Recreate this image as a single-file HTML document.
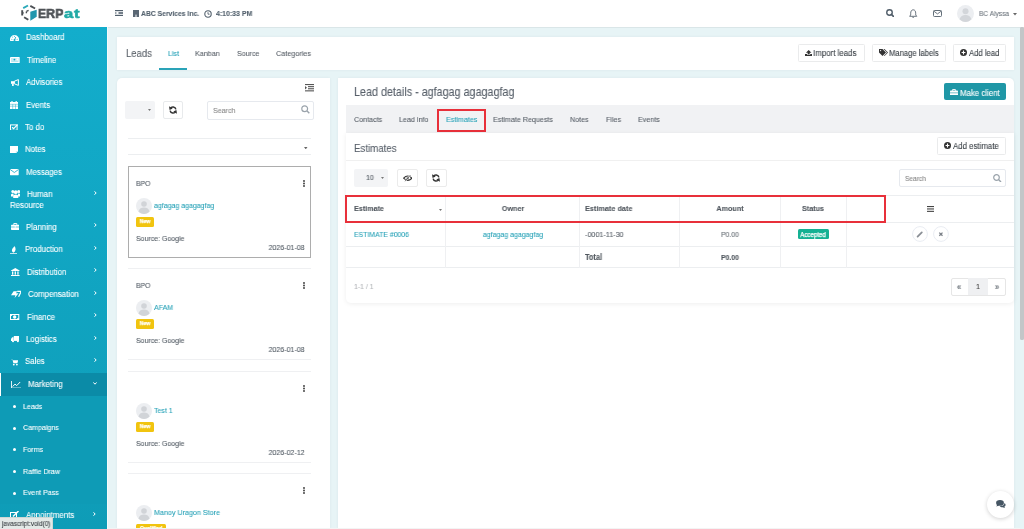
<!DOCTYPE html>
<html><head><meta charset="utf-8">
<style>
*{box-sizing:border-box;margin:0;padding:0}
html,body{width:1024px;height:529px;overflow:hidden}
body{font-family:"Liberation Sans",sans-serif;background:#e7f4f6;position:relative}
.t{position:absolute;white-space:nowrap;-webkit-text-stroke:0.1px currentColor;will-change:transform}
.r{position:absolute;display:block}
</style></head>
<body>
<div class="r" style="left:0px;top:0px;width:1024px;height:27px;background:#fff;"></div>
<div class="r" style="left:107px;top:27px;width:917px;height:1px;background:#dae6e8;"></div>
<div class="r" style="left:0px;top:27px;width:107px;height:502px;background:linear-gradient(#13adcc,#0e9cb7);"></div>
<div class="r" style="left:107px;top:27px;width:1px;height:502px;background:#f4fafb;"></div>
<div class="r" style="left:1020px;top:27px;width:4px;height:313px;background:#c3c6c8;border-radius:2px 2px 2px 2px;"></div>
<svg class="r" style="left:20px;top:4px;" width="18" height="18" viewBox="0 0 18 18">
<g stroke-linecap="butt" fill="none" stroke-width="1.9">
<path d="M3.2 4.1 L8 1.5" stroke="#2aa9b8"/>
<path d="M10.3 1.9 L15.1 4.5" stroke="#4c5054"/>
<path d="M2.2 6.2 V11.5" stroke="#4c5054"/>
<path d="M4.1 13.2 L8.3 15.7" stroke="#4c5054"/>
<path d="M6.4 7.4 L8.6 6.4 M6.4 7.4 V9.2" stroke="#4c5054" stroke-width="1.4"/>
</g>
<path d="M10.3 7.7 L16.7 5.7 V12.8 L10.3 16.7 Z" fill="#2196ad"/>
<path d="M2.2 7.5 L4.2 8.9 L2.2 10.3 Z" fill="#4c5054"/>
</svg>
<div class="t" style="left:38.40px;top:6.71px;font-size:13.28px;line-height:13.28px;color:#4e5256;font-weight:bold;transform:scaleX(0.9302);transform-origin:0 50%;-webkit-text-stroke:0.55px #4e5256;">ERP</div>
<div class="t" style="left:63.80px;top:6.80px;font-size:13.10px;line-height:13.10px;color:#22aaa6;font-weight:bold;letter-spacing:0.5px;transform:scaleX(1.0000);transform-origin:0 50%;transform:scaleX(1.27);-webkit-text-stroke:0.55px #22aaa6;">at</div>
<svg class="r" style="left:115px;top:10px;" width="8" height="6" viewBox="0 0 8 6"><rect x="0" y="0" width="8" height="1.2" fill="#52606d"/><rect x="3.5" y="2.2" width="4.5" height="0.8" fill="#52606d"/><rect x="3.5" y="3.2" width="4.5" height="0.8" fill="#52606d"/><rect x="0" y="4.8" width="8" height="1.2" fill="#52606d"/><path d="M0.3 2 L2 3 L0.3 4 Z" fill="#52606d"/></svg>
<svg class="r" style="left:133px;top:10px;" width="6" height="7" viewBox="0 0 6 7"><rect x="0" y="0" width="6" height="7" fill="#5a6773"/><rect x="2" y="4.6" width="2" height="2.4" fill="#aab2b9"/></svg>
<div class="t" style="left:141.30px;top:10.35px;font-size:7.48px;line-height:7.48px;color:#52606d;font-weight:bold;transform:scaleX(0.9091);transform-origin:0 50%;">ABC Services Inc.</div>
<svg class="r" style="left:203.5px;top:9.8px;" width="8" height="8" viewBox="0 0 8 8"><circle cx="4" cy="4" r="3.2" fill="none" stroke="#52606d" stroke-width="1.1"/><path d="M4 2.2 V4.2 H5.6" fill="none" stroke="#52606d" stroke-width="0.9"/></svg>
<div class="t" style="left:215.60px;top:10.27px;font-size:7.65px;line-height:7.65px;color:#52606d;font-weight:bold;transform:scaleX(0.9091);transform-origin:0 50%;">4:10:33 PM</div>
<svg class="r" style="left:885.5px;top:9px;" width="8" height="8" viewBox="0 0 8 8"><circle cx="3.5" cy="3.5" r="2.75" fill="none" stroke="#4f5c68" stroke-width="1.35"/><path d="M5.4 5.4 L7.4 7.4" stroke="#4f5c68" stroke-width="1.6" stroke-linecap="round"/></svg>
<svg class="r" style="left:909.3px;top:8.6px;" width="8.4" height="9" viewBox="0 0 8.4 9"><path d="M4.2 0.8 C2.4 0.8 1.7 2.4 1.7 4.2 V6 L0.6 7.3 H7.8 L6.7 6 V4.2 C6.7 2.4 6 0.8 4.2 0.8 Z" fill="none" stroke="#5c6873" stroke-width="0.9" stroke-linejoin="round"/><path d="M3.3 7.9 Q4.2 9 5.1 7.9" fill="#5c6873" stroke="#5c6873" stroke-width="0.6"/></svg>
<svg class="r" style="left:932.8px;top:10px;" width="9" height="7" viewBox="0 0 9 7"><rect x="0.5" y="0.5" width="8" height="6" rx="0.9" fill="none" stroke="#5c6873" stroke-width="0.95"/><path d="M0.9 1.2 L4.5 3.9 L8.1 1.2" fill="none" stroke="#5c6873" stroke-width="0.9"/></svg>
<svg class="r" style="left:957px;top:5px;" width="17" height="17" viewBox="0 0 17 17"><circle cx="8.5" cy="8.5" r="8.5" fill="#eceef1"/><circle cx="8.5" cy="6.3" r="3" fill="#d3d6da"/><path d="M2.6 14.3 C3.5 11 6 10 8.5 10 C11 10 13.5 11 14.4 14.3 C13 15.8 11 17 8.5 17 C6 17 4 15.8 2.6 14.3 Z" fill="#d3d6da"/></svg>
<div class="t" style="left:979.00px;top:10.15px;font-size:7.26px;line-height:7.26px;color:#6e767e;transform:scaleX(0.9091);transform-origin:0 50%;">BC Alyssa</div>
<svg class="r" style="left:1012.5px;top:12.5px;" width="4" height="3" viewBox="0 0 4 3"><path d="M0 0 H4 L2 2.4 Z" fill="#666"/></svg>
<div class="r" style="left:0px;top:373px;width:107px;height:23px;background:#0b8ba7;"></div>
<div class="r" style="left:0px;top:373px;width:1px;height:23px;background:#fff;"></div>
<div class="r" style="left:0px;top:396px;width:107px;height:107.5px;background:#0e9bb6;"></div>
<div class="t" style="left:26.00px;top:33.45px;font-size:8.69px;line-height:8.69px;color:#fff;transform:scaleX(0.9091);transform-origin:0 50%;">Dashboard</div>
<div class="t" style="left:27.00px;top:55.85px;font-size:8.69px;line-height:8.69px;color:#fff;transform:scaleX(0.9091);transform-origin:0 50%;">Timeline</div>
<div class="t" style="left:26.00px;top:78.25px;font-size:8.69px;line-height:8.69px;color:#fff;transform:scaleX(0.9091);transform-origin:0 50%;">Advisories</div>
<div class="t" style="left:25.50px;top:100.75px;font-size:8.69px;line-height:8.69px;color:#fff;transform:scaleX(0.9091);transform-origin:0 50%;">Events</div>
<div class="t" style="left:25.00px;top:122.85px;font-size:8.69px;line-height:8.69px;color:#fff;transform:scaleX(0.9091);transform-origin:0 50%;">To do</div>
<div class="t" style="left:25.40px;top:145.45px;font-size:8.69px;line-height:8.69px;color:#fff;transform:scaleX(0.9091);transform-origin:0 50%;">Notes</div>
<div class="t" style="left:26.00px;top:167.65px;font-size:8.69px;line-height:8.69px;color:#fff;transform:scaleX(0.9091);transform-origin:0 50%;">Messages</div>
<div class="t" style="left:26.80px;top:189.95px;font-size:8.69px;line-height:8.69px;color:#fff;transform:scaleX(0.9091);transform-origin:0 50%;">Human</div>
<svg class="r" style="left:94px;top:190.6px;" width="3" height="4" viewBox="0 0 3 4"><path d="M0.4 0.3 L2.2 2 L0.4 3.7" fill="none" stroke="#fff" stroke-width="1"/></svg>
<div class="t" style="left:26.00px;top:222.75px;font-size:8.69px;line-height:8.69px;color:#fff;transform:scaleX(0.9091);transform-origin:0 50%;">Planning</div>
<svg class="r" style="left:94px;top:223.4px;" width="3" height="4" viewBox="0 0 3 4"><path d="M0.4 0.3 L2.2 2 L0.4 3.7" fill="none" stroke="#fff" stroke-width="1"/></svg>
<div class="t" style="left:24.50px;top:245.45px;font-size:8.69px;line-height:8.69px;color:#fff;transform:scaleX(0.9091);transform-origin:0 50%;">Production</div>
<svg class="r" style="left:94px;top:246.1px;" width="3" height="4" viewBox="0 0 3 4"><path d="M0.4 0.3 L2.2 2 L0.4 3.7" fill="none" stroke="#fff" stroke-width="1"/></svg>
<div class="t" style="left:27.00px;top:267.75px;font-size:8.69px;line-height:8.69px;color:#fff;transform:scaleX(0.9091);transform-origin:0 50%;">Distribution</div>
<svg class="r" style="left:94px;top:268.40000000000003px;" width="3" height="4" viewBox="0 0 3 4"><path d="M0.4 0.3 L2.2 2 L0.4 3.7" fill="none" stroke="#fff" stroke-width="1"/></svg>
<div class="t" style="left:28.30px;top:290.15px;font-size:8.69px;line-height:8.69px;color:#fff;transform:scaleX(0.9091);transform-origin:0 50%;">Compensation</div>
<svg class="r" style="left:94px;top:290.8px;" width="3" height="4" viewBox="0 0 3 4"><path d="M0.4 0.3 L2.2 2 L0.4 3.7" fill="none" stroke="#fff" stroke-width="1"/></svg>
<div class="t" style="left:26.50px;top:312.55px;font-size:8.69px;line-height:8.69px;color:#fff;transform:scaleX(0.9091);transform-origin:0 50%;">Finance</div>
<svg class="r" style="left:94px;top:313.20000000000005px;" width="3" height="4" viewBox="0 0 3 4"><path d="M0.4 0.3 L2.2 2 L0.4 3.7" fill="none" stroke="#fff" stroke-width="1"/></svg>
<div class="t" style="left:25.70px;top:334.95px;font-size:8.69px;line-height:8.69px;color:#fff;transform:scaleX(0.9091);transform-origin:0 50%;">Logistics</div>
<svg class="r" style="left:94px;top:335.6px;" width="3" height="4" viewBox="0 0 3 4"><path d="M0.4 0.3 L2.2 2 L0.4 3.7" fill="none" stroke="#fff" stroke-width="1"/></svg>
<div class="t" style="left:25.20px;top:357.45px;font-size:8.69px;line-height:8.69px;color:#fff;transform:scaleX(0.9091);transform-origin:0 50%;">Sales</div>
<svg class="r" style="left:94px;top:358.1px;" width="3" height="4" viewBox="0 0 3 4"><path d="M0.4 0.3 L2.2 2 L0.4 3.7" fill="none" stroke="#fff" stroke-width="1"/></svg>
<div class="t" style="left:28.30px;top:379.95px;font-size:8.69px;line-height:8.69px;color:#fff;transform:scaleX(0.9091);transform-origin:0 50%;">Marketing</div>
<svg class="r" style="left:93px;top:381.6px;" width="4" height="3" viewBox="0 0 4 3"><path d="M0.3 0.4 L2 2.2 L3.7 0.4" fill="none" stroke="#fff" stroke-width="1"/></svg>
<div class="t" style="left:10.40px;top:201.35px;font-size:8.69px;line-height:8.69px;color:#fff;transform:scaleX(0.9091);transform-origin:0 50%;">Resource</div>
<div class="r" style="left:13px;top:404.9px;width:3px;height:3.0px;background:#fff;border-radius:50%;"></div>
<div class="t" style="left:22.60px;top:402.68px;font-size:7.81px;line-height:7.81px;color:#fff;transform:scaleX(0.9091);transform-origin:0 50%;">Leads</div>
<div class="r" style="left:13px;top:426.7px;width:3px;height:3.0px;background:#fff;border-radius:50%;"></div>
<div class="t" style="left:22.60px;top:424.48px;font-size:7.81px;line-height:7.81px;color:#fff;transform:scaleX(0.9091);transform-origin:0 50%;">Campaigns</div>
<div class="r" style="left:13px;top:448.3px;width:3px;height:3.0px;background:#fff;border-radius:50%;"></div>
<div class="t" style="left:22.60px;top:446.08px;font-size:7.81px;line-height:7.81px;color:#fff;transform:scaleX(0.9091);transform-origin:0 50%;">Forms</div>
<div class="r" style="left:13px;top:469.9px;width:3px;height:3.0px;background:#fff;border-radius:50%;"></div>
<div class="t" style="left:22.60px;top:467.68px;font-size:7.81px;line-height:7.81px;color:#fff;transform:scaleX(0.9091);transform-origin:0 50%;">Raffle Draw</div>
<div class="r" style="left:13px;top:491.5px;width:3px;height:3.0px;background:#fff;border-radius:50%;"></div>
<div class="t" style="left:22.60px;top:489.28px;font-size:7.81px;line-height:7.81px;color:#fff;transform:scaleX(0.9091);transform-origin:0 50%;">Event Pass</div>
<div class="t" style="left:25.70px;top:510.65px;font-size:8.69px;line-height:8.69px;color:#fff;transform:scaleX(0.9091);transform-origin:0 50%;">Appointments</div>
<svg class="r" style="left:93px;top:512px;" width="3" height="4" viewBox="0 0 3 4"><path d="M0.4 0.3 L2.2 2 L0.4 3.7" fill="none" stroke="#fff" stroke-width="1"/></svg>
<svg class="r" style="left:10.2px;top:34.6px;" width="9" height="6.4" viewBox="0 0 9 6.4"><path d="M0.4 6.4 A4.5 4.5 0 1 1 8.6 6.4 Z" fill="#fff"/><circle cx="4.5" cy="5" r="1" fill="#13abcb"/><path d="M4.5 5 L5.8 2" stroke="#13abcb" stroke-width="0.9"/><circle cx="1.9" cy="4.3" r="0.5" fill="#13abcb"/><circle cx="7.1" cy="4.3" r="0.5" fill="#13abcb"/><circle cx="2.7" cy="2.1" r="0.5" fill="#13abcb"/><circle cx="4.5" cy="1.3" r="0.5" fill="#13abcb"/></svg>
<svg class="r" style="left:10.3px;top:56.8px;" width="9.7" height="6.2" viewBox="0 0 9.7 6.2"><rect x="0" y="0" width="9.7" height="6.2" rx="0.5" fill="#fff"/><rect x="1" y="1" width="7.7" height="4.2" fill="#c8ecf3"/><circle cx="4.4" cy="2.6" r="0.9" fill="#13a9ca"/><rect x="1.6" y="3.9" width="6.5" height="0.5" fill="#9fdbe8"/><rect x="6.6" y="1.5" width="1.5" height="1.8" fill="#fff"/></svg>
<svg class="r" style="left:10.6px;top:79px;" width="8.2" height="7" viewBox="0 0 8.2 7"><rect x="0" y="2.2" width="3.2" height="2.6" fill="#fff"/><rect x="1.1" y="4.6" width="1.6" height="2.4" fill="#fff"/><path d="M3.4 2.2 L7.4 0.6 V6.4 L3.4 4.8 Z" fill="none" stroke="#fff" stroke-width="1"/></svg>
<svg class="r" style="left:10.2px;top:101.3px;" width="8.2" height="8" viewBox="0 0 8.2 8"><rect x="0" y="1" width="8.2" height="7" fill="#fff"/><path d="M0 3.3 H8.2 M0 5.2 H8.2 M2.7 3.3 V8 M5.5 3.3 V8" stroke="#13a8c8" stroke-width="0.45"/><rect x="1.4" y="0" width="1.2" height="2" fill="#fff"/><rect x="5.6" y="0" width="1.2" height="2" fill="#fff"/></svg>
<svg class="r" style="left:10.2px;top:123.6px;" width="8" height="6.8" viewBox="0 0 8 6.8"><rect x="0.5" y="0.9" width="6.6" height="5.4" fill="none" stroke="#fff" stroke-width="1"/><path d="M2.1 3.3 L3.6 4.7 L7.6 0.6" fill="none" stroke="#fff" stroke-width="1.2"/></svg>
<svg class="r" style="left:10.2px;top:146px;" width="8" height="7.4" viewBox="0 0 8 7.4"><path d="M0 0 H8 V5.2 L5.8 7.4 H0 Z" fill="#fff"/><path d="M5.8 7.4 V5.2 H8" fill="#bfe6ef"/></svg>
<svg class="r" style="left:10.2px;top:169.4px;" width="8.7" height="6.2" viewBox="0 0 8.7 6.2"><rect x="0" y="0" width="8.7" height="6.2" rx="0.4" fill="#fff"/><path d="M0.1 0.5 L4.35 3.5 L8.6 0.5" fill="none" stroke="#12a6c6" stroke-width="0.8"/></svg>
<svg class="r" style="left:10.5px;top:190px;" width="9.5" height="8" viewBox="0 0 9.5 8"><circle cx="1.8" cy="1.6" r="1.5" fill="#fff"/><circle cx="7.7" cy="1.6" r="1.5" fill="#fff"/><circle cx="4.75" cy="2.2" r="1.9" fill="#fff"/><path d="M0 6.5 V4.4 Q0.5 3.3 2.5 3.4 L2.6 6.5 Z M9.5 6.5 V4.4 Q9 3.3 7 3.4 L6.9 6.5 Z" fill="#fff"/><path d="M2.2 8 V5.5 Q4.75 3.6 7.3 5.5 V8 Z" fill="#fff"/></svg>
<svg class="r" style="left:10.5px;top:223.3px;" width="8.6" height="7" viewBox="0 0 8.6 7"><rect x="0" y="1.7" width="8.6" height="5.3" rx="0.8" fill="#fff"/><path d="M2.8 1.9 V0.5 H5.8 V1.9" fill="none" stroke="#fff" stroke-width="0.9"/><rect x="0" y="3.7" width="8.6" height="0.6" fill="#11a5c3"/><rect x="3.7" y="3.2" width="1.2" height="1.4" fill="#fff"/></svg>
<svg class="r" style="left:10.4px;top:246px;" width="7" height="8.2" viewBox="0 0 7 8.2"><path d="M3.6 6.6 Q1.8 6 1.9 4.2 Q2 2.6 3.4 1.5 Q4.1 0.8 4.2 0 Q5.8 1.4 5.6 3.4 Q5.3 5.6 3.6 6.6 Z" fill="#fff"/><path d="M3.3 6.6 L3.1 7.3" stroke="#fff" stroke-width="0.8"/><rect x="0" y="7.3" width="7" height="0.9" fill="#fff"/></svg>
<svg class="r" style="left:11px;top:267.6px;" width="8.6" height="8" viewBox="0 0 8.6 8"><path d="M0 2.4 L4.3 0 L8.6 2.4 V3 H0 Z" fill="#fff"/><rect x="1" y="3.4" width="1.3" height="3.3" fill="#fff"/><rect x="3.65" y="3.4" width="1.3" height="3.3" fill="#fff"/><rect x="6.3" y="3.4" width="1.3" height="3.3" fill="#fff"/><rect x="0" y="7" width="8.6" height="1" fill="#fff"/></svg>
<svg class="r" style="left:11px;top:290.2px;" width="10.4" height="8" viewBox="0 0 10.4 8"><path d="M0 5.2 L2.6 1.2 H6.2 L5 3.2 H7.6 L3.6 8 L4.4 5.2 Z" fill="#fff"/><path d="M6.2 1.4 H10.2 L7.6 6.8" fill="none" stroke="#fff" stroke-width="1.2"/></svg>
<svg class="r" style="left:10.3px;top:314.2px;" width="9.3" height="6" viewBox="0 0 9.3 6"><rect x="0.5" y="0.5" width="8.3" height="5" fill="none" stroke="#fff" stroke-width="1"/><circle cx="4.65" cy="3" r="1.7" fill="#fff"/><rect x="0.5" y="0.5" width="1.6" height="1.4" fill="#fff"/><rect x="7.2" y="4.1" width="1.6" height="1.4" fill="#fff"/></svg>
<svg class="r" style="left:10.8px;top:336.3px;" width="8.6" height="6.3" viewBox="0 0 8.6 6.3"><rect x="2.8" y="0" width="5.8" height="4.9" fill="#fff"/><path d="M2.6 1.2 H1.2 L0 2.8 V4.9 H2.6 Z" fill="#fff"/><circle cx="2" cy="5.3" r="1" fill="#fff"/><circle cx="6.9" cy="5.3" r="1" fill="#fff"/></svg>
<svg class="r" style="left:11.1px;top:359px;" width="7.4" height="6.5" viewBox="0 0 7.4 6.5"><path d="M0 0.4 H1.4 L2.4 4.2 H6.4 L7.2 1.2 H1.8 Z" fill="#fff"/><circle cx="2.8" cy="5.6" r="0.9" fill="#fff"/><circle cx="5.9" cy="5.6" r="0.9" fill="#fff"/></svg>
<svg class="r" style="left:11.1px;top:380.6px;" width="10" height="7.6" viewBox="0 0 10 7.6"><path d="M0.45 0 V7.1 H10" fill="none" stroke="#fff" stroke-width="0.9"/><path d="M1.6 5.6 L4 3.1 L5.7 4.6 L9.2 1" fill="none" stroke="#fff" stroke-width="1"/></svg>
<svg class="r" style="left:10px;top:510.5px;" width="9" height="8" viewBox="0 0 9 8"><rect x="0.5" y="1.5" width="6" height="6" fill="none" stroke="#fff" stroke-width="1"/><path d="M3 5.5 L8.5 0" stroke="#fff" stroke-width="1.4"/></svg>
<div class="r" style="left:0px;top:517px;width:53px;height:12px;background:#e3e9e7;border:1px solid #cfd8d5;border-left:none;border-bottom:none;border-top-right-radius:1px;"></div>
<div class="t" style="left:2.30px;top:520.16px;font-size:7.04px;line-height:7.04px;color:#3a3f44;transform:scaleX(0.9091);transform-origin:0 50%;">javascript:void(0)</div>
<div class="r" style="left:117px;top:37px;width:897px;height:32.5px;background:#fff;box-shadow:0 0 3px rgba(0,40,50,.06);"></div>
<div class="t" style="left:125.60px;top:48.50px;font-size:10.45px;line-height:10.45px;color:#5a6169;transform:scaleX(0.9091);transform-origin:0 50%;">Leads</div>
<div class="t" style="left:167.80px;top:49.60px;font-size:7.78px;line-height:7.78px;color:#2aa3b8;transform:scaleX(0.9091);transform-origin:0 50%;">List</div>
<div class="r" style="left:159px;top:68px;width:28px;height:2px;background:#2aa3b8;"></div>
<div class="t" style="left:195.30px;top:49.95px;font-size:7.88px;line-height:7.88px;color:#5a6169;transform:scaleX(0.9091);transform-origin:0 50%;">Kanban</div>
<div class="t" style="left:236.90px;top:49.98px;font-size:7.81px;line-height:7.81px;color:#5a6169;transform:scaleX(0.9091);transform-origin:0 50%;">Source</div>
<div class="t" style="left:276.00px;top:49.91px;font-size:7.96px;line-height:7.96px;color:#5a6169;transform:scaleX(0.9091);transform-origin:0 50%;">Categories</div>
<div class="r" style="left:797.5px;top:43.5px;width:67.5px;height:18.0px;background:#fff;border:1px solid #eaebec;border-radius:1.5px;"></div>
<div class="t" style="left:813.40px;top:48.85px;font-size:8.69px;line-height:8.69px;color:#3a4046;transform:scaleX(0.9091);transform-origin:0 50%;">Import leads</div>
<svg class="r" style="left:804.8px;top:49.5px;" width="7.4" height="6.6" viewBox="0 0 7.4 6.6"><path d="M3.7 0 L6.5 2.8 H4.7 V4.6 H2.7 V2.8 H0.9 Z" fill="#333"/><path d="M0 3.9 H2.2 V5 H5.2 V3.9 H7.4 V6.6 H0 Z" fill="#333"/></svg>
<div class="r" style="left:872px;top:43.5px;width:73.5px;height:18.0px;background:#fff;border:1px solid #eaebec;border-radius:1.5px;"></div>
<div class="t" style="left:888.80px;top:48.99px;font-size:8.42px;line-height:8.42px;color:#3a4046;transform:scaleX(0.9091);transform-origin:0 50%;">Manage labels</div>
<svg class="r" style="left:878.5px;top:48.8px;" width="9" height="7" viewBox="0 0 9 7"><path d="M0 0 H3.5 L7 3.5 L3.5 7 L0 3.5 Z" fill="#333"/><path d="M4.5 0 H5.5 L9 3.5 L5.5 7 H4.8 L8 3.5 Z" fill="#333"/><circle cx="1.6" cy="1.6" r="0.6" fill="#fff"/></svg>
<div class="r" style="left:952.5px;top:43.5px;width:53.0px;height:18.0px;background:#fff;border:1px solid #eaebec;border-radius:1.5px;"></div>
<div class="t" style="left:968.50px;top:48.96px;font-size:8.47px;line-height:8.47px;color:#3a4046;transform:scaleX(0.9091);transform-origin:0 50%;">Add lead</div>
<svg class="r" style="left:959.5px;top:49px;" width="7" height="7" viewBox="0 0 7 7"><circle cx="3.5" cy="3.5" r="3.5" fill="#333"/><path d="M3.5 1.6 V5.4 M1.6 3.5 H5.4" stroke="#fff" stroke-width="1.1"/></svg>
<div class="r" style="left:117px;top:78px;width:213px;height:451px;background:#fff;border-radius:5px 0 0 0;box-shadow:0 0 3px rgba(0,40,50,.06);"></div>
<svg class="r" style="left:305px;top:84px;" width="9" height="7.5" viewBox="0 0 9 7.5"><rect x="0" y="0" width="9" height="1.1" fill="#555"/><rect x="3" y="2.1" width="6" height="1.1" fill="#555"/><rect x="3" y="4.2" width="6" height="1.1" fill="#555"/><rect x="0" y="6.3" width="9" height="1.1" fill="#555"/><path d="M0 2 L2 3.7 L0 5.4 Z" fill="#555"/></svg>
<div class="r" style="left:125px;top:100.5px;width:30px;height:18.5px;background:#f3f4f6;border-radius:2px;"></div>
<svg class="r" style="left:147.5px;top:108.5px;" width="3" height="2" viewBox="0 0 3 2"><path d="M0 0 H3 L1.5 2 Z" fill="#777"/></svg>
<div class="r" style="left:162.5px;top:100.5px;width:20.5px;height:18.5px;background:#fff;border:1px solid #e8eaec;border-radius:2px;"></div>
<svg class="r" style="left:168.5px;top:105.5px;" width="8" height="8" viewBox="0 0 8 8"><path d="M6.9 3.3 A3 3 0 0 0 1.3 2.5" fill="none" stroke="#333" stroke-width="1.5"/><path d="M1.1 4.7 A3 3 0 0 0 6.7 5.5" fill="none" stroke="#333" stroke-width="1.5"/><path d="M0 0.3 L0.6 3.9 L3.7 2.4 Z" fill="#333"/><path d="M8 7.7 L7.4 4.1 L4.3 5.6 Z" fill="#333"/></svg>
<div class="r" style="left:207px;top:100.5px;width:107px;height:19.0px;background:#fff;border:1px solid #e6e9ee;border-radius:2px;"></div>
<div class="t" style="left:212.50px;top:106.78px;font-size:7.81px;line-height:7.81px;color:#888;transform:scaleX(0.9091);transform-origin:0 50%;">Search</div>
<svg class="r" style="left:300.8px;top:105.3px;" width="9" height="9" viewBox="0 0 9 9"><circle cx="3.7" cy="3.7" r="2.9" fill="none" stroke="#9aa3ab" stroke-width="1.2"/><path d="M5.8 5.8 L8.3 8.3" stroke="#9aa3ab" stroke-width="1.4"/></svg>
<div class="r" style="left:127.5px;top:138px;width:183.5px;height:1px;background:#eceef0;"></div>
<svg class="r" style="left:304px;top:146.5px;" width="3.5" height="2.5" viewBox="0 0 3.5 2.5"><path d="M0 0 H3.5 L1.75 2.3 Z" fill="#666"/></svg>
<div class="r" style="left:127.5px;top:154px;width:183.5px;height:1px;background:#eceef0;"></div>
<div class="r" style="left:128px;top:166px;width:183px;height:92px;border:1px solid #adadad;"></div>
<div class="t" style="left:136.20px;top:180.15px;font-size:7.48px;line-height:7.48px;color:#525b64;transform:scaleX(0.9091);transform-origin:0 50%;">BPO</div>
<svg class="r" style="left:303px;top:180px;" width="2" height="7" viewBox="0 0 2 7"><circle cx="1" cy="1" r="0.9" fill="#333"/><circle cx="1" cy="3.5" r="0.9" fill="#333"/><circle cx="1" cy="6" r="0.9" fill="#333"/></svg>
<svg class="r" style="left:136.1px;top:198.2px;" width="16" height="16" viewBox="0 0 16 16"><circle cx="8" cy="8" r="8" fill="#eceef1"/><circle cx="8" cy="6" r="2.8" fill="#d1d4d8"/><path d="M2.5 13.5 C3.3 10.5 5.6 9.6 8 9.6 C10.4 9.6 12.7 10.5 13.5 13.5 C12.2 15 10.2 16 8 16 C5.8 16 3.8 15 2.5 13.5 Z" fill="#d1d4d8"/></svg>
<div class="t" style="left:154.20px;top:201.84px;font-size:7.70px;line-height:7.70px;color:#2aa3b8;transform:scaleX(0.9091);transform-origin:0 50%;">agfagag agagagfag</div>
<div class="r" style="left:136.1px;top:217.2px;width:17.5px;height:9.400000000000006px;background:#f1c40f;border-radius:1.5px;"></div>
<div class="t" style="left:144.85px;top:219.41px;font-size:5.72px;line-height:5.72px;color:#fff;font-weight:bold;transform:translateX(-50%) scaleX(0.9091);transform-origin:50% 50%;-webkit-text-stroke:0.25px #fff;">New</div>
<div class="t" style="left:136.20px;top:234.85px;font-size:7.68px;line-height:7.68px;color:#525b64;transform:scaleX(0.9091);transform-origin:0 50%;">Source: Google</div>
<div class="t" style="right:719.40px;top:244.02px;font-size:7.74px;line-height:7.74px;color:#525b64;transform:scaleX(0.9091);transform-origin:100% 50%;">2026-01-08</div>
<div class="r" style="left:128px;top:268px;width:183px;height:92px;border-top:1px solid #eff0f2;border-bottom:1px solid #eff0f2;"></div>
<div class="t" style="left:136.20px;top:282.15px;font-size:7.48px;line-height:7.48px;color:#525b64;transform:scaleX(0.9091);transform-origin:0 50%;">BPO</div>
<svg class="r" style="left:303px;top:282px;" width="2" height="7" viewBox="0 0 2 7"><circle cx="1" cy="1" r="0.9" fill="#333"/><circle cx="1" cy="3.5" r="0.9" fill="#333"/><circle cx="1" cy="6" r="0.9" fill="#333"/></svg>
<svg class="r" style="left:136.1px;top:300.2px;" width="16" height="16" viewBox="0 0 16 16"><circle cx="8" cy="8" r="8" fill="#eceef1"/><circle cx="8" cy="6" r="2.8" fill="#d1d4d8"/><path d="M2.5 13.5 C3.3 10.5 5.6 9.6 8 9.6 C10.4 9.6 12.7 10.5 13.5 13.5 C12.2 15 10.2 16 8 16 C5.8 16 3.8 15 2.5 13.5 Z" fill="#d1d4d8"/></svg>
<div class="t" style="left:154.20px;top:303.84px;font-size:7.70px;line-height:7.70px;color:#2aa3b8;transform:scaleX(0.9091);transform-origin:0 50%;">AFAM</div>
<div class="r" style="left:136.1px;top:319.2px;width:17.5px;height:9.400000000000034px;background:#f1c40f;border-radius:1.5px;"></div>
<div class="t" style="left:144.85px;top:321.41px;font-size:5.72px;line-height:5.72px;color:#fff;font-weight:bold;transform:translateX(-50%) scaleX(0.9091);transform-origin:50% 50%;-webkit-text-stroke:0.25px #fff;">New</div>
<div class="t" style="left:136.20px;top:336.85px;font-size:7.68px;line-height:7.68px;color:#525b64;transform:scaleX(0.9091);transform-origin:0 50%;">Source: Google</div>
<div class="t" style="right:719.40px;top:346.02px;font-size:7.74px;line-height:7.74px;color:#525b64;transform:scaleX(0.9091);transform-origin:100% 50%;">2026-01-08</div>
<div class="r" style="left:128px;top:371px;width:183px;height:92px;border-top:1px solid #eff0f2;border-bottom:1px solid #eff0f2;"></div>
<svg class="r" style="left:303px;top:385px;" width="2" height="7" viewBox="0 0 2 7"><circle cx="1" cy="1" r="0.9" fill="#333"/><circle cx="1" cy="3.5" r="0.9" fill="#333"/><circle cx="1" cy="6" r="0.9" fill="#333"/></svg>
<svg class="r" style="left:136.1px;top:403.2px;" width="16" height="16" viewBox="0 0 16 16"><circle cx="8" cy="8" r="8" fill="#eceef1"/><circle cx="8" cy="6" r="2.8" fill="#d1d4d8"/><path d="M2.5 13.5 C3.3 10.5 5.6 9.6 8 9.6 C10.4 9.6 12.7 10.5 13.5 13.5 C12.2 15 10.2 16 8 16 C5.8 16 3.8 15 2.5 13.5 Z" fill="#d1d4d8"/></svg>
<div class="t" style="left:154.20px;top:406.84px;font-size:7.70px;line-height:7.70px;color:#2aa3b8;transform:scaleX(0.9091);transform-origin:0 50%;">Test 1</div>
<div class="r" style="left:136.1px;top:422.2px;width:17.5px;height:9.400000000000034px;background:#f1c40f;border-radius:1.5px;"></div>
<div class="t" style="left:144.85px;top:424.41px;font-size:5.72px;line-height:5.72px;color:#fff;font-weight:bold;transform:translateX(-50%) scaleX(0.9091);transform-origin:50% 50%;-webkit-text-stroke:0.25px #fff;">New</div>
<div class="t" style="left:136.20px;top:439.85px;font-size:7.68px;line-height:7.68px;color:#525b64;transform:scaleX(0.9091);transform-origin:0 50%;">Source: Google</div>
<div class="t" style="right:719.40px;top:449.02px;font-size:7.74px;line-height:7.74px;color:#525b64;transform:scaleX(0.9091);transform-origin:100% 50%;">2026-02-12</div>
<div class="r" style="left:128px;top:473px;width:183px;height:92px;border-top:1px solid #eff0f2;border-bottom:1px solid #eff0f2;"></div>
<svg class="r" style="left:303px;top:487px;" width="2" height="7" viewBox="0 0 2 7"><circle cx="1" cy="1" r="0.9" fill="#333"/><circle cx="1" cy="3.5" r="0.9" fill="#333"/><circle cx="1" cy="6" r="0.9" fill="#333"/></svg>
<svg class="r" style="left:136.1px;top:505.2px;" width="16" height="16" viewBox="0 0 16 16"><circle cx="8" cy="8" r="8" fill="#eceef1"/><circle cx="8" cy="6" r="2.8" fill="#d1d4d8"/><path d="M2.5 13.5 C3.3 10.5 5.6 9.6 8 9.6 C10.4 9.6 12.7 10.5 13.5 13.5 C12.2 15 10.2 16 8 16 C5.8 16 3.8 15 2.5 13.5 Z" fill="#d1d4d8"/></svg>
<div class="t" style="left:154.20px;top:508.76px;font-size:7.87px;line-height:7.87px;color:#2aa3b8;transform:scaleX(0.9091);transform-origin:0 50%;">Manoy Uragon Store</div>
<div class="r" style="left:136.1px;top:524.2px;width:29.5px;height:9.399999999999977px;background:#f1c40f;border-radius:1.5px;"></div>
<div class="t" style="left:150.85px;top:526.41px;font-size:5.72px;line-height:5.72px;color:#fff;font-weight:bold;transform:translateX(-50%) scaleX(0.9091);transform-origin:50% 50%;-webkit-text-stroke:0.25px #fff;">Qualified</div>
<div class="r" style="left:338px;top:78px;width:676px;height:451px;background:#fff;border-radius:0 5px 0 0;box-shadow:0 0 3px rgba(0,40,50,.06);"></div>
<div class="t" style="left:354.00px;top:87.11px;font-size:11.85px;line-height:11.85px;color:#58606a;transform:scaleX(0.9091);transform-origin:0 50%;">Lead details - agfagag agagagfag</div>
<div class="r" style="left:943.5px;top:82.8px;width:62.5px;height:17.5px;background:#1f97a6;border-radius:2px;"></div>
<svg class="r" style="left:950.3px;top:88.6px;" width="8" height="6.5" viewBox="0 0 8 6.5"><rect x="0" y="1.6" width="8" height="4.9" rx="0.8" fill="#fff"/><path d="M2.6 1.8 V0.5 H5.4 V1.8" fill="none" stroke="#fff" stroke-width="0.9"/><rect x="0" y="3.6" width="8" height="0.6" fill="#1f97a6"/></svg>
<div class="t" style="left:959.80px;top:88.58px;font-size:8.63px;line-height:8.63px;color:#fff;transform:scaleX(0.9091);transform-origin:0 50%;">Make client</div>
<div class="r" style="left:346px;top:105px;width:668px;height:28px;background:#f1f2f4;"></div>
<div class="t" style="left:354.00px;top:116.36px;font-size:7.87px;line-height:7.87px;color:#5a6169;transform:scaleX(0.9091);transform-origin:0 50%;">Contacts</div>
<div class="t" style="left:399.40px;top:116.36px;font-size:7.87px;line-height:7.87px;color:#5a6169;transform:scaleX(0.9091);transform-origin:0 50%;">Lead info</div>
<div class="t" style="left:445.50px;top:115.66px;font-size:7.87px;line-height:7.87px;color:#2aa3b8;transform:scaleX(0.9091);transform-origin:0 50%;">Estimates</div>
<div class="t" style="left:493.40px;top:116.36px;font-size:7.87px;line-height:7.87px;color:#5a6169;transform:scaleX(0.9091);transform-origin:0 50%;">Estimate Requests</div>
<div class="t" style="left:570.30px;top:116.36px;font-size:7.87px;line-height:7.87px;color:#5a6169;transform:scaleX(0.9091);transform-origin:0 50%;">Notes</div>
<div class="t" style="left:606.00px;top:116.36px;font-size:7.87px;line-height:7.87px;color:#5a6169;transform:scaleX(0.9091);transform-origin:0 50%;">Files</div>
<div class="t" style="left:637.60px;top:116.36px;font-size:7.87px;line-height:7.87px;color:#5a6169;transform:scaleX(0.9091);transform-origin:0 50%;">Events</div>
<div class="r" style="left:436.5px;top:108.5px;width:49.5px;height:23.5px;border:2px solid #e8303a;"></div>
<div class="r" style="left:346px;top:133px;width:668px;height:170px;background:#fff;box-shadow:0 1px 5px rgba(0,0,0,.07);border-radius:0 0 5px 5px;"></div>
<div class="t" style="left:353.80px;top:142.99px;font-size:10.67px;line-height:10.67px;color:#58606a;transform:scaleX(0.9091);transform-origin:0 50%;">Estimates</div>
<div class="r" style="left:346px;top:160px;width:668px;height:1px;background:#f0f0f0;"></div>
<div class="r" style="left:937px;top:136.5px;width:69px;height:18.0px;background:#fff;border:1px solid #eaebec;border-radius:1.5px;"></div>
<div class="t" style="left:953.00px;top:141.88px;font-size:8.63px;line-height:8.63px;color:#3a4046;transform:scaleX(0.9091);transform-origin:0 50%;">Add estimate</div>
<svg class="r" style="left:944.2px;top:142px;" width="7" height="7" viewBox="0 0 7 7"><circle cx="3.5" cy="3.5" r="3.5" fill="#333"/><path d="M3.5 1.6 V5.4 M1.6 3.5 H5.4" stroke="#fff" stroke-width="1.1"/></svg>
<div class="r" style="left:354px;top:169px;width:34px;height:18px;background:#f3f4f6;border-radius:2px;"></div>
<div class="t" style="left:365.80px;top:174.14px;font-size:7.70px;line-height:7.70px;color:#5a6169;transform:scaleX(0.9091);transform-origin:0 50%;">10</div>
<svg class="r" style="left:381px;top:177px;" width="3" height="2" viewBox="0 0 3 2"><path d="M0 0 H3 L1.5 2 Z" fill="#777"/></svg>
<div class="r" style="left:396.5px;top:169px;width:21.5px;height:18px;background:#fff;border:1px solid #ebebeb;border-radius:2px;"></div>
<svg class="r" style="left:402.5px;top:175.3px;" width="9.5" height="6.5" viewBox="0 0 9.5 6.5"><path d="M0.6 3.2 Q4.75 -1.2 8.9 3.2 Q4.75 7.6 0.6 3.2 Z" fill="none" stroke="#333" stroke-width="1.1"/><circle cx="4.75" cy="3.2" r="1.2" fill="#333"/><path d="M2.2 6.2 L7.3 0.2" stroke="#fff" stroke-width="1.4"/><path d="M2.2 6.2 L7.3 0.2" stroke="#333" stroke-width="0.8"/></svg>
<div class="r" style="left:425.5px;top:169px;width:21.0px;height:18px;background:#fff;border:1px solid #ebebeb;border-radius:2px;"></div>
<svg class="r" style="left:432px;top:174px;" width="8" height="8" viewBox="0 0 8 8"><path d="M6.9 3.3 A3 3 0 0 0 1.3 2.5" fill="none" stroke="#333" stroke-width="1.5"/><path d="M1.1 4.7 A3 3 0 0 0 6.7 5.5" fill="none" stroke="#333" stroke-width="1.5"/><path d="M0 0.3 L0.6 3.9 L3.7 2.4 Z" fill="#333"/><path d="M8 7.7 L7.4 4.1 L4.3 5.6 Z" fill="#333"/></svg>
<div class="r" style="left:899px;top:169px;width:107px;height:18px;background:#fff;border:1px solid #e6e9ee;border-radius:2px;"></div>
<div class="t" style="left:904.50px;top:175.05px;font-size:7.26px;line-height:7.26px;color:#888;transform:scaleX(0.9091);transform-origin:0 50%;">Search</div>
<svg class="r" style="left:993.3px;top:173.8px;" width="8.5" height="8.5" viewBox="0 0 8.5 8.5"><circle cx="3.5" cy="3.5" r="2.8" fill="none" stroke="#9aa3ab" stroke-width="1.2"/><path d="M5.5 5.5 L8 8" stroke="#9aa3ab" stroke-width="1.4"/></svg>
<div class="r" style="left:346px;top:195px;width:668px;height:1px;background:#eceef0;"></div>
<div class="r" style="left:346px;top:222px;width:668px;height:1px;background:#eceef0;"></div>
<div class="r" style="left:346px;top:246px;width:668px;height:1px;background:#eceef0;"></div>
<div class="r" style="left:346px;top:267px;width:668px;height:1px;background:#eceef0;"></div>
<div class="r" style="left:445px;top:195px;width:1px;height:73px;background:#eff0f2;"></div>
<div class="r" style="left:579px;top:195px;width:1px;height:73px;background:#eff0f2;"></div>
<div class="r" style="left:679px;top:195px;width:1px;height:73px;background:#eff0f2;"></div>
<div class="r" style="left:779.5px;top:195px;width:1.0px;height:73px;background:#eff0f2;"></div>
<div class="r" style="left:846px;top:195px;width:1px;height:73px;background:#eff0f2;"></div>
<div class="t" style="left:353.70px;top:205.03px;font-size:7.92px;line-height:7.92px;color:#50575e;font-weight:bold;transform:scaleX(0.9091);transform-origin:0 50%;">Estimate</div>
<svg class="r" style="left:438.5px;top:209px;" width="3" height="2" viewBox="0 0 3 2"><path d="M0 0 H3 L1.5 2 Z" fill="#777"/></svg>
<div class="t" style="left:512.60px;top:205.03px;font-size:7.92px;line-height:7.92px;color:#50575e;font-weight:bold;transform:translateX(-50%) scaleX(0.9091);transform-origin:50% 50%;">Owner</div>
<div class="t" style="left:585.00px;top:204.98px;font-size:8.03px;line-height:8.03px;color:#50575e;font-weight:bold;transform:scaleX(0.9091);transform-origin:0 50%;">Estimate date</div>
<div class="t" style="left:729.70px;top:205.03px;font-size:7.92px;line-height:7.92px;color:#50575e;font-weight:bold;transform:translateX(-50%) scaleX(0.9091);transform-origin:50% 50%;">Amount</div>
<div class="t" style="left:813.00px;top:205.03px;font-size:7.92px;line-height:7.92px;color:#50575e;font-weight:bold;transform:translateX(-50%) scaleX(0.9091);transform-origin:50% 50%;">Status</div>
<svg class="r" style="left:926.5px;top:205.5px;" width="7" height="6" viewBox="0 0 7 6"><rect x="0" y="0" width="7" height="1.1" fill="#444"/><rect x="0" y="2.4" width="7" height="1.1" fill="#444"/><rect x="0" y="4.8" width="7" height="1.1" fill="#444"/></svg>
<div class="r" style="left:345px;top:194.5px;width:541px;height:28.5px;border:2px solid #e8303a;"></div>
<div class="t" style="left:353.70px;top:231.49px;font-size:7.59px;line-height:7.59px;color:#2aa3b8;transform:scaleX(0.9091);transform-origin:0 50%;">ESTIMATE #0006</div>
<div class="t" style="left:512.60px;top:231.44px;font-size:7.70px;line-height:7.70px;color:#2aa3b8;transform:translateX(-50%) scaleX(0.9091);transform-origin:50% 50%;">agfagag agagagfag</div>
<div class="t" style="left:585.00px;top:231.33px;font-size:7.92px;line-height:7.92px;color:#5a6169;transform:scaleX(0.9091);transform-origin:0 50%;">-0001-11-30</div>
<div class="t" style="left:729.90px;top:231.49px;font-size:7.59px;line-height:7.59px;color:#6a7178;transform:translateX(-50%) scaleX(0.9091);transform-origin:50% 50%;">P0.00</div>
<div class="r" style="left:798px;top:229.3px;width:30.5px;height:9.5px;background:#15b193;border-radius:1.5px;"></div>
<div class="t" style="left:813.30px;top:231.52px;font-size:6.71px;line-height:6.71px;color:#fff;transform:translateX(-50%) scaleX(0.9091);transform-origin:50% 50%;-webkit-text-stroke:0.25px #fff;">Accepted</div>
<svg class="r" style="left:912.3px;top:226.3px;" width="16" height="16" viewBox="0 0 16 16"><circle cx="8" cy="8" r="7.4" fill="#fff" stroke="#e6eaf0" stroke-width="0.9"/><path d="M5.6 10.6 L9.8 6.4" stroke="#8a8f96" stroke-width="1.8" stroke-linecap="round"/></svg>
<svg class="r" style="left:932.5px;top:226.3px;" width="16" height="16" viewBox="0 0 16 16"><circle cx="8" cy="8" r="7.4" fill="#fff" stroke="#e6eaf0" stroke-width="0.9"/><path d="M6.3 6.6 L9.5 9.8 M9.5 6.6 L6.3 9.8" stroke="#7b8188" stroke-width="1.3"/></svg>
<div class="t" style="left:585.00px;top:253.92px;font-size:8.14px;line-height:8.14px;color:#50575e;font-weight:bold;transform:scaleX(0.9091);transform-origin:0 50%;">Total</div>
<div class="t" style="left:729.90px;top:254.19px;font-size:7.59px;line-height:7.59px;color:#50575e;font-weight:bold;transform:translateX(-50%) scaleX(0.9091);transform-origin:50% 50%;">P0.00</div>
<div class="t" style="left:353.50px;top:282.89px;font-size:7.59px;line-height:7.59px;color:#b3b6b9;transform:scaleX(0.9091);transform-origin:0 50%;">1-1 / 1</div>
<div class="r" style="left:950.5px;top:277.5px;width:55.5px;height:18.0px;background:#fff;border:1px solid #e6e6e6;border-radius:2px;"></div>
<div class="r" style="left:968px;top:278px;width:19.5px;height:17px;background:#eff0f2;"></div>
<div class="t" style="left:959.00px;top:282.52px;font-size:8.36px;line-height:8.36px;color:#6f767d;font-weight:bold;transform:translateX(-50%) scaleX(0.9091);transform-origin:50% 50%;">«</div>
<div class="t" style="left:977.70px;top:283.14px;font-size:7.70px;line-height:7.70px;color:#444;transform:translateX(-50%) scaleX(0.9091);transform-origin:50% 50%;">1</div>
<div class="t" style="left:996.50px;top:282.52px;font-size:8.36px;line-height:8.36px;color:#6f767d;font-weight:bold;transform:translateX(-50%) scaleX(0.9091);transform-origin:50% 50%;">»</div>
<div class="r" style="left:986.5px;top:490.7px;width:27px;height:27px;border-radius:50%;background:#fff;box-shadow:0 1px 4px rgba(0,0,0,.18);"></div>
<svg class="r" style="left:995.6px;top:500px;" width="10" height="8" viewBox="0 0 10 8"><ellipse cx="4" cy="2.9" rx="3.9" ry="2.8" fill="#465664"/><path d="M1.2 4.6 L0.4 6.6 L3 5.6 Z" fill="#465664"/><path d="M8.6 2.9 C10 3.8 10 6 8.3 6.8 L9.1 8 L6.4 7.2 C5.1 7.2 4.2 6.8 3.7 6.2 C6.4 6.2 8.4 4.9 8.6 2.9 Z" fill="#465664"/></svg>
<div class="r" style="left:108px;top:528px;width:912px;height:1px;background:#f3f4f4;"></div>
<div class="r" style="left:1020px;top:27px;width:4px;height:313px;background:#c3c6c8;border-radius:2px;"></div>
</body></html>
